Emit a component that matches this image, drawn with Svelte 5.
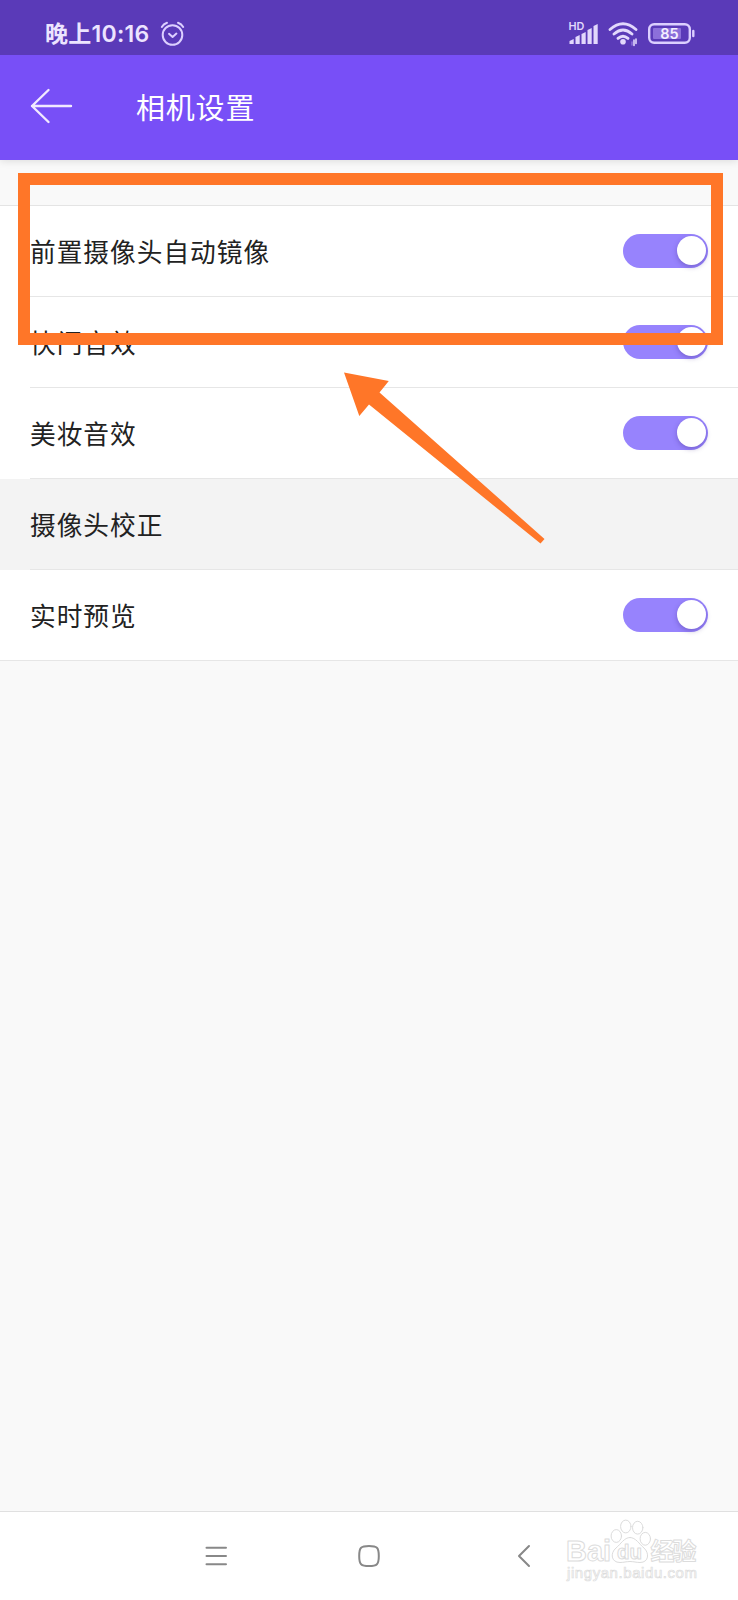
<script lang="ts">
	type Setting = { label: string; toggle: boolean; on?: boolean };

	let settings: Setting[] = $state([
		{ label: '前置摄像头自动镜像', toggle: true, on: true },
		{ label: '快门音效', toggle: true, on: true },
		{ label: '美妆音效', toggle: true, on: true },
		{ label: '摄像头校正', toggle: false },
		{ label: '实时预览', toggle: true, on: true }
	]);

	const signalBars = [4, 8, 11, 15, 19];
</script>

<div class="screen">
	<header>
		<div class="status">
			<span class="time">晚上10:16</span>
			<svg class="alarm" width="26" height="26" viewBox="0 0 26 26">
				<circle cx="12.5" cy="14" r="9.8" />
				<path d="M1.8 6 Q3.6 3 7 1.8 M23.2 6 Q21.4 3 18 1.8 M9 12.8 L12.6 16 L16.4 12.6" />
			</svg>
			<div class="status-right">
				<svg class="signal" width="30" height="24" viewBox="0 0 30 24">
					<text x="-0.5" y="8.4">HD</text>
					{#each signalBars as h, i}
						<path d="M{0.5 + i * 6} 22 v{-h + 1} l4.2 -2 v{h + 1} z" />
					{/each}
				</svg>
				<svg class="wifi" width="31" height="26" viewBox="0 0 31 26">
					<path d="M2 8.5 Q15 -3 28 8.5 M6 13 Q15 5 24 13 M10 17.4 Q15 13 20 17.4" />
					<circle cx="15" cy="20.8" r="2.8" />
					<path class="traffic dim" d="M24 21 v3" />
					<path class="traffic" d="M26 19 v5.5 M28 18 v4.5" />
				</svg>
				<svg class="battery" width="48" height="22" viewBox="0 0 48 22">
					<rect class="shell" x="1.2" y="1.2" width="40.6" height="18.6" rx="5" />
					<rect class="charge" x="5" y="5" width="28" height="11" rx="1" />
					<path class="cap" d="M45.3 8 v5" />
					<text x="21.5" y="15.8" text-anchor="middle">85</text>
				</svg>
			</div>
		</div>
		<div class="titlebar">
			<svg class="back" width="44" height="36" viewBox="0 0 44 36">
				<path d="M18.5 2 L2 18 L18.5 34 M2 18 H41" />
			</svg>
			<h1>相机设置</h1>
		</div>
	</header>

	<main>
		<ul>
			{#each settings as item}
				<li class:plain={!item.toggle}>
					<span>{item.label}</span>
					{#if item.toggle}
						<button
							class="switch"
							class:on={item.on}
							aria-label={item.label}
							onclick={() => (item.on = !item.on)}
						></button>
					{/if}
				</li>
			{/each}
		</ul>
	</main>

	<nav>
		<svg width="22" height="20" viewBox="0 0 22 20"><path d="M1.5 1.8 H21 M1.5 10 H21 M1.5 18.2 H21" /></svg>
		<svg class="home" width="24" height="24" viewBox="0 0 24 24"><path d="M12 2 C20 2 21.8 3.5 21.8 12 C21.8 20.5 20 22 12 22 C4 22 2.2 20.5 2.2 12 C2.2 3.5 4 2 12 2 Z" /></svg>
		<svg width="22" height="24" viewBox="0 0 22 24"><path d="M13 2 L3 12 L13 22" /></svg>
	</nav>

	<div class="frame"></div>
	<svg class="arrow" width="202" height="174" viewBox="0 0 202 174">
		<path d="M0 0.5 L44.8 9 L35.5 20.5 L200.5 167 L196.5 171.5 L25 32.5 L15.3 44 Z" />
	</svg>

	<svg class="watermark" width="140" height="70" viewBox="0 0 140 70">
		<text class="brand" x="2" y="43" textLength="45" lengthAdjust="spacingAndGlyphs">Bai</text>
		<path d="M66 19.5 C60 19.5 57 26 52 30 C46 35 47 44.5 56 44.5 C60 44.5 62 43.5 66 43.5 C70 43.5 72 44.5 76 44.5 C85 44.5 85.5 35 80 30 C75 26 72 19.5 66 19.5 Z" />
		<ellipse cx="52.3" cy="18" rx="5.2" ry="6.4" />
		<ellipse cx="61.8" cy="8.5" rx="5.2" ry="6.4" />
		<ellipse cx="73.7" cy="9.7" rx="5.2" ry="6.4" />
		<ellipse cx="81.3" cy="20.8" rx="5.2" ry="6.4" />
		<text class="du" x="53" y="40.5" textLength="25" lengthAdjust="spacingAndGlyphs">du</text>
		<text class="cn" x="86.5" y="42" textLength="46">经验</text>
		<text class="url" x="3" y="60" textLength="130">jingyan.baidu.com</text>
	</svg>
</div>

<style>
	:global(body) {
		background: #f9f9f9;
	}

	.screen {
		position: relative;
		width: 738px;
		height: 1600px;
		display: flex;
		flex-direction: column;
		overflow: hidden;
		background: #f9f9f9;
		font-family: 'Noto Sans CJK SC', sans-serif;
		color: #222;
	}

	svg {
		display: block;
		flex: none;
		fill: none;
		stroke-linecap: round;
		stroke-linejoin: round;
	}

	header {
		background: #784ff7;
		color: #fff;
		box-shadow: 0 1px 8px rgba(0, 0, 0, 0.12);
	}

	.status {
		display: flex;
		align-items: center;
		height: 55px;
		box-sizing: border-box;
		padding: 12px 42px 0 45px;
		background: #5a3ab8;
		color: #ece4ff;
	}

	.time {
		font-family: Inter, 'Noto Sans CJK SC', sans-serif;
		font-size: 23px;
		font-weight: 600;
		line-height: 30px;
		letter-spacing: 0.25px;
		width: 115px;
		padding-top: 1px;
		white-space: nowrap;
	}

	.alarm {
		stroke: #dccfff;
		stroke-width: 2;
	}

	.status-right {
		display: flex;
		align-items: center;
		gap: 9px;
		margin-left: auto;
	}

	.signal {
		fill: #e2d8fc;
		overflow: visible;
	}

	.signal text {
		font: 600 10.8px Inter, sans-serif;
	}

	.wifi {
		stroke: #e2d8fc;
		stroke-width: 2.8;
	}

	.wifi circle {
		fill: #e2d8fc;
		stroke: none;
	}

	.wifi .traffic {
		stroke-width: 1.6;
	}

	.wifi .dim {
		stroke: #8c6fda;
	}

	.battery .shell {
		stroke: #dccfff;
		stroke-width: 2.4;
	}

	.battery .charge {
		fill: #8c6fda;
	}

	.battery .cap {
		stroke: #dccfff;
		stroke-width: 2.4;
	}

	.battery text {
		font: 600 14.5px Inter, sans-serif;
		fill: #f4efff;
	}

	.titlebar {
		display: flex;
		align-items: center;
		gap: 62px;
		height: 105px;
		box-sizing: border-box;
		padding: 0 0 3px 30px;
	}

	.back {
		stroke: #f1e9ff;
		stroke-width: 2.4;
	}

	h1 {
		margin: 0;
		font-size: 29px;
		font-weight: 400;
		line-height: 40px;
		letter-spacing: 0.8px;
	}

	main {
		flex: 1;
		padding-top: 45px;
	}

	ul {
		margin: 0;
		padding: 0;
		list-style: none;
		background: #fff;
		border-top: 1px solid #e4e4e4;
	}

	li {
		display: flex;
		align-items: center;
		justify-content: space-between;
		height: 91px;
		box-sizing: border-box;
		padding: 0 30px 2px;
		background: linear-gradient(#e6e6e6, #e6e6e6) 30px 100% / 100% 1px no-repeat #fff;
	}

	li.plain {
		background-color: #f3f3f3;
	}

	li:last-child {
		background-position: 0 100%;
	}

	li span {
		font-size: 25.7px;
		line-height: 36px;
		letter-spacing: 1px;
	}

	.switch {
		display: flex;
		width: 85px;
		height: 34px;
		padding: 2px;
		border: 0;
		border-radius: 17px;
		background: #ccc;
	}

	.switch.on {
		justify-content: flex-end;
		background: #9783fd;
	}

	.switch::after {
		content: '';
		width: 29px;
		height: 29px;
		border-radius: 50%;
		background: #fff;
		box-shadow: 0 2px 5px rgba(60, 40, 130, 0.35);
	}

	nav {
		display: flex;
		align-items: center;
		justify-content: space-between;
		height: 89px;
		box-sizing: border-box;
		padding: 0 200px 1px 205px;
		background: #fff;
		border-top: 1px solid #e0e0e0;
	}

	nav svg {
		stroke: #888;
		stroke-width: 2;
	}

	nav .home {
		margin-right: 5px;
	}

	.frame {
		position: absolute;
		left: 18px;
		top: 173px;
		width: 705px;
		height: 172px;
		box-sizing: border-box;
		border: 12.5px solid #ff7628;
	}

	.arrow {
		position: absolute;
		left: 344px;
		top: 372px;
		fill: #ff7628;
	}

	.watermark {
		position: absolute;
		left: 564px;
		top: 1518px;
		fill: #fff;
		stroke: #dcdcdc;
		stroke-width: 1;
	}

	.watermark text {
		font-family: 'Liberation Sans', 'Noto Sans CJK SC', sans-serif;
		font-weight: 700;
	}

	.watermark .brand {
		font-size: 29px;
	}

	.watermark .du {
		font-size: 20px;
	}

	.watermark .cn {
		font-size: 24px;
	}

	.watermark .url {
		font-size: 15px;
		font-weight: 400;
		stroke-width: 0.7;
	}
</style>
